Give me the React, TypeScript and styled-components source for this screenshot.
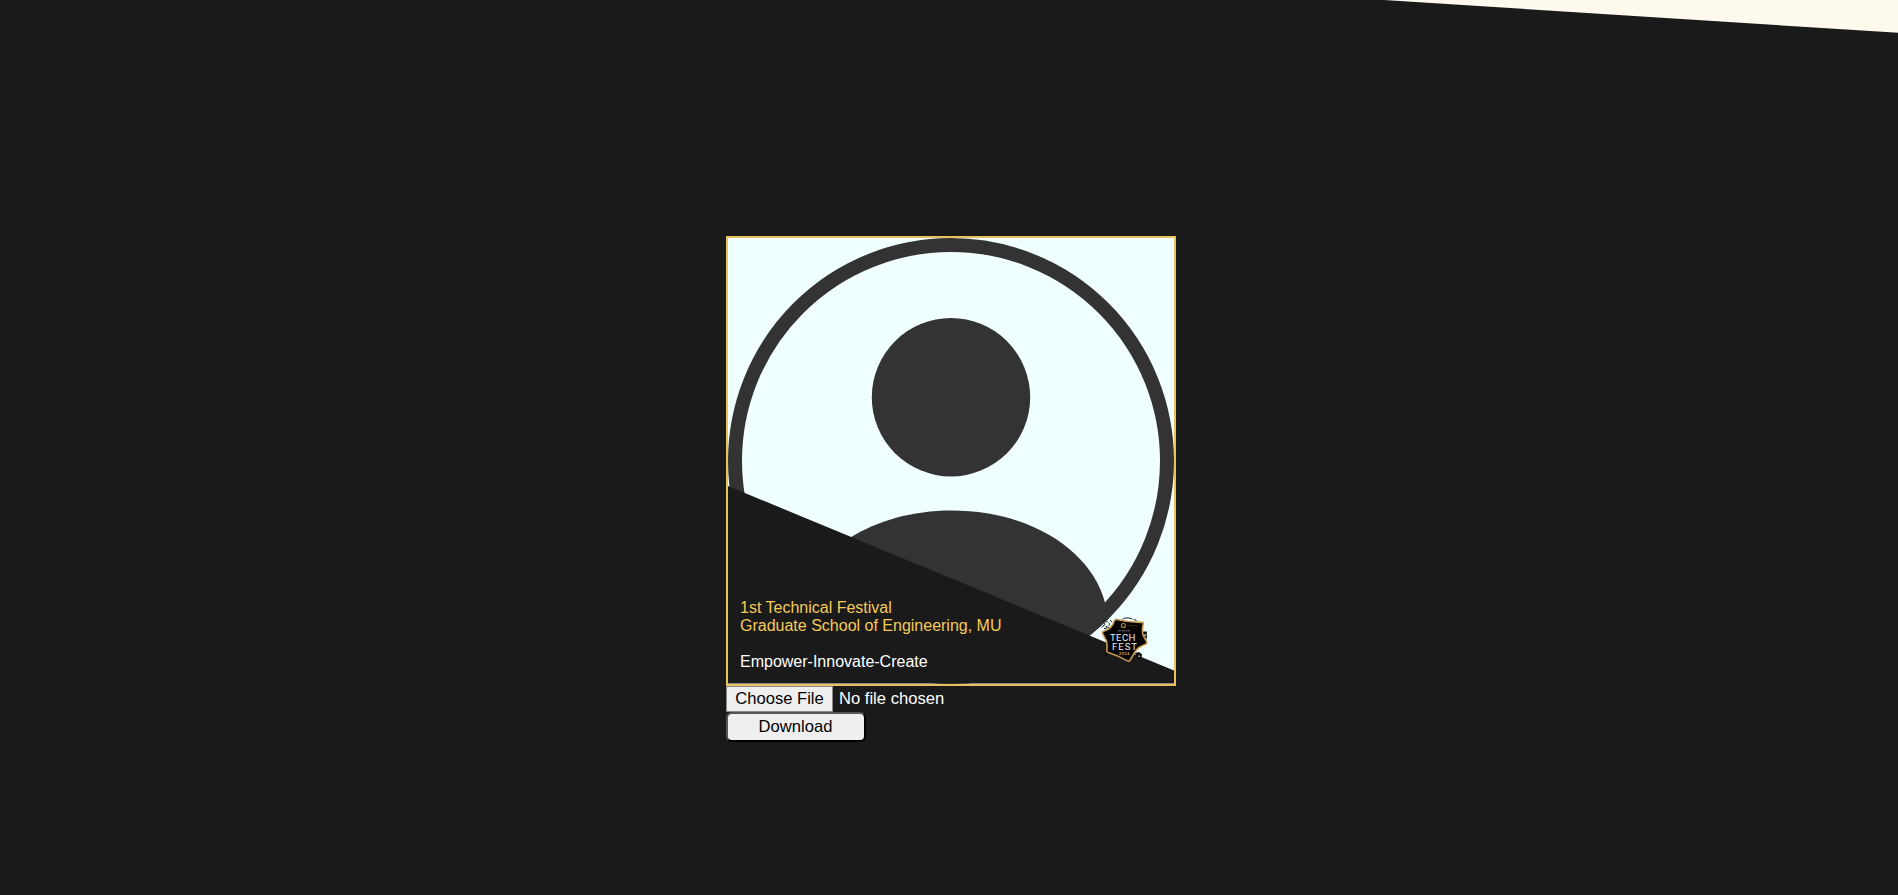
import React from "react";
import styled, { createGlobalStyle } from "styled-components";

const GlobalStyle = createGlobalStyle`
  *, *::before, *::after { box-sizing: border-box; }
  body {
    margin: 0;
    background: #1a1a1a;
    font-family: Arial, "Liberation Sans", sans-serif;
    font-size: 16px;
    color: #fff;
    overflow: hidden;
  }
`;

const Page = styled.main`
  position: relative;
  display: flex;
  flex-direction: column;
  align-items: center;
  width: 100%;
  height: 895px;
  padding: 236px 0 0 4px;
`;

const CornerWedge = styled.div`
  position: absolute;
  top: 0;
  right: 0;
  width: 516px;
  height: 34px;
  background: #fff9ee;
  clip-path: polygon(2px 0, 100% 0, 100% 32.8px);
`;

const Generator = styled.section`
  display: flex;
  flex-direction: column;
  align-items: flex-start;
  width: 450px;
`;

const Card = styled.div`
  position: relative;
  width: 450px;
  height: 450px;
  border: 2px solid #ebc15b;
  background: azure;
  overflow: hidden;
`;

const Avatar = styled.svg`
  display: block;
  width: 446px;
  height: 446px;
`;

const Overlay = styled.div`
  position: absolute;
  inset: 0 0 0.5px;
  background: #1a1a1a;
  clip-path: polygon(0 248px, 100% 432.6px, 100% 100%, 0 100%);
`;

const Caption = styled.div`
  position: absolute;
  left: 12px;
  bottom: 13px;
  display: flex;
  flex-direction: column;
  line-height: 18px;
`;

const CaptionLine = styled.span<{ $tone: "gold" | "white" }>`
  color: ${(p) => (p.$tone === "gold" ? "#f5ca58" : "#fff")};
  margin-top: ${(p) => (p.$tone === "white" ? "18px" : "0")};
`;

const Badge = styled.svg`
  position: absolute;
  left: 370px;
  top: 374px;
  width: 55px;
  height: 54px;
`;

const FileRow = styled.div`
  display: flex;
  align-items: center;
  gap: 6px;
  height: 26px;
  font-size: 16.6px;
`;

const FileButton = styled.button`
  width: 107px;
  height: 26px;
  padding: 0;
  border: 1px solid #8a8a8a;
  background: #efefef;
  color: #000;
  font: inherit;
  line-height: 22px;
`;

const FileName = styled.span`
  line-height: 24px;
`;

const DownloadButton = styled.button`
  width: 140px;
  height: 30px;
  padding: 0 1px 0 0;
  border: 2px outset #000;
  border-radius: 6px;
  background: #efefef;
  color: #000;
  font: inherit;
  font-size: 16.6px;
`;

function TechFestBadge() {
  return (
    <Badge viewBox="0 0 55 54">
      <g fill="none" stroke="#151515" strokeWidth="1">
        <circle cx="9" cy="12.2" r="2.4" strokeDasharray="2 1" />
        <path d="M4 15.5l2.5-3M4.5 10l3-2.5M6 16.5l6-1M12 8l2 2" />
        <path d="M24.5 7.4c2-2 7-2 10 0M36 7.5l2.5 1" />
      </g>
      <path d="M44.5 19.5h4.3v7.3h-4.3zM7 40.5h2.6v3H7z" fill="#080808" />
      <path d="M47.6 21.8v2.6l-1.8-1.3z" fill="#dff" />
      <path d="M37 41l4-1 3 2.5-.6 3.5-2.8.8-1.6-2z" fill="#080808" />
      <circle cx="41.2" cy="44.3" r="1" fill="#9aa" />
      <path
        d="M17.8 7.2 Q31 10.6 44.4 10.4 Q45.8 10.6 45.2 12 Q43.6 18.5 45.3 23.5 L48.9 30.2 Q49 31.5 47.5 32.2 Q39.5 35 36.6 40.5 L32 48.4 Q31 49.6 29.5 48.9 Q20 43.5 10.2 40.5 Q8.4 39.8 8.8 38 Q10 30 6.6 25.5 L4.4 21.2 Q4 19.7 5.8 19.2 Q14 17 16.2 9 Z"
        fill="#030303"
        stroke="#c99a52"
        strokeWidth="1.6"
        strokeLinejoin="round"
      />
      <circle cx="25.4" cy="13.5" r="2" fill="none" stroke="#b98a35" strokeWidth="1.1" />
      <path d="M29.5 13.7h9.5" stroke="#49381c" strokeWidth="1.1" strokeDasharray="1.5 .5" />
      <path d="M20 18.8h12" stroke="#888" strokeWidth="0.9" strokeDasharray="2 .5" />
      <g fontFamily="Roboto, sans-serif" textAnchor="middle" fill="#e8eef5">
        <text x="24.7" y="28.6" fontSize="9.6" textLength="25.4" lengthAdjust="spacing">TECH</text>
        <text x="26.6" y="37.5" fontSize="9.6" textLength="25" lengthAdjust="spacing">FEST</text>
        <text x="26" y="42.6" fontSize="4.2" fontWeight="700" fill="#c8954c" textLength="10.6">2024</text>
      </g>
    </Badge>
  );
}

export default function App() {
  return (
    <>
      <GlobalStyle />
      <Page>
        <CornerWedge />
        <Generator>
          <Card>
            <Avatar viewBox="0 0 446 446">
              <path
                d="M377 364.7C364 314 304 272.5 224 272.5S84 314 71 364.7L100 410L223 440L346 410Z"
                fill="#333"
              />
              <circle cx="223" cy="159.2" r="79.2" fill="#333" />
              <circle cx="223" cy="223" r="216" fill="none" stroke="#333" strokeWidth="14" />
            </Avatar>
            <Overlay />
            <Caption>
              <CaptionLine $tone="gold">1st Technical Festival</CaptionLine>
              <CaptionLine $tone="gold">Graduate School of Engineering, MU</CaptionLine>
              <CaptionLine $tone="white">Empower-Innovate-Create</CaptionLine>
            </Caption>
            <TechFestBadge />
          </Card>
          <FileRow>
            <FileButton type="button">Choose File</FileButton>
            <FileName>No file chosen</FileName>
          </FileRow>
          <DownloadButton type="button">Download</DownloadButton>
        </Generator>
      </Page>
    </>
  );
}
